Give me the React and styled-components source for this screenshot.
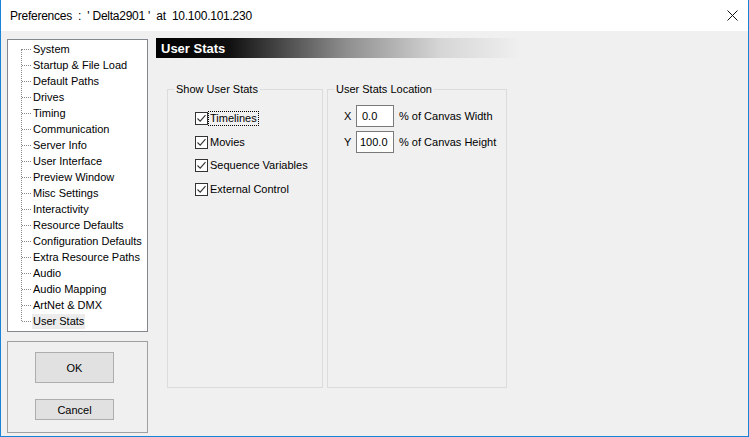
import React from 'react'
import styled, { createGlobalStyle } from 'styled-components'

const GlobalStyle = createGlobalStyle`
  body {
    margin: 0;
    background: #ffffff;
  }
  * { box-sizing: border-box; }
`

const Window = styled.div`
  width: 749px;
  height: 437px;
  display: flex;
  flex-direction: column;
  border: 1px solid #1883d7;
  border-top: none;
  font-family: "Liberation Sans", Arial, sans-serif;
  font-size: 11px;
  color: #000;
  overflow: hidden;
`

const TitleBar = styled.div`
  height: 31px;
  flex: none;
  display: flex;
  align-items: center;
  justify-content: space-between;
  background: #fff;
  padding: 0 9px 0 9px;
  font-family: "Liberation Sans", Arial, sans-serif;
  font-size: 12px;
  letter-spacing: -0.25px;
  white-space: pre;
`

const CloseButton = styled.div`
  width: 12px;
  height: 12px;
  display: flex;
  align-items: center;
  justify-content: center;
  margin-right: 1px;
`

const Body = styled.div`
  flex: 1;
  background: #f0f0f0;
  display: flex;
  padding: 8px 0 0 6px;
`

const LeftColumn = styled.div`
  width: 141px;
  display: flex;
  flex-direction: column;
  gap: 9px;
`

const TreeBox = styled.div`
  height: 293px;
  background: #fff;
  border: 1px solid #828790;
  padding-top: 1px;
`

const TreeList = styled.ul`
  position: relative;
  list-style: none;
  margin: 0;
  padding: 0;

  &::before {
    content: '';
    position: absolute;
    left: 13px;
    top: 8px;
    height: 272px;
    border-left: 1px dotted #8a8a8a;
  }
`

const TreeItem = styled.li`
  height: 16px;
  display: flex;
  align-items: center;
  padding-left: 14px;

  &::before {
    content: '';
    width: 9px;
    margin-right: 1px;
    border-top: 1px dotted #8a8a8a;
  }
`

const TreeLabel = styled.span`
  padding: 1px 1px 2px 1px;
  background: ${p => (p.$selected ? '#ececec' : 'transparent')};
  white-space: nowrap;
`

const ButtonPanel = styled.div`
  height: 92px;
  border: 1px solid #a0a0a0;
  display: flex;
  flex-direction: column;
  padding: 10px 0 0 27px;
  gap: 16px;
`

const DialogButton = styled.div`
  width: 79px;
  height: ${p => p.$tall ? '31px' : '21px'};
  background: #e1e1e1;
  border: 1px solid #adadad;
  display: flex;
  align-items: center;
  justify-content: center;
`

const Content = styled.div`
  margin-left: 8px;
  display: flex;
  flex-direction: column;
`

const SectionHeader = styled.div`
  width: 365px;
  height: 20px;
  margin-top: -1px;
  padding-left: 5px;
  display: flex;
  align-items: center;
  background: linear-gradient(to right, #000 0%, #101010 20%, #8e8e8e 52%, #d6d6d6 78%, #f0f0f0 100%);
  color: #fff;
  font-weight: bold;
  font-size: 13px;
`

const GroupRow = styled.div`
  display: flex;
  gap: 4px;
  margin: 25px 0 0 11px;
`

const Group = styled.fieldset`
  width: ${p => p.$width}px;
  height: 305px;
  margin: 0;
  padding: 0;
  border: 1px solid #dcdcdc;
  display: flex;
  flex-direction: column;
`

const Legend = styled.legend`
  margin-left: 6px;
  padding: 0 2px;
  line-height: 13px;
`

const CheckList = styled.div`
  display: flex;
  flex-direction: column;
  gap: 10.5px;
  padding: 16px 0 0 27px;
`

const CheckRow = styled.div`
  display: flex;
  align-items: center;
  height: 13px;
  gap: 1px;
`

const Box = styled.span`
  width: 13px;
  height: 13px;
  border: 1px solid #333;
  background: #fff;
  display: flex;
  align-items: center;
  justify-content: center;
`

const CheckText = styled.span`
  padding: 0 1px;
  line-height: 13px;
  outline: ${p => (p.$focus ? '1px dotted #000' : 'none')};
`

const FieldList = styled.div`
  display: flex;
  flex-direction: column;
  gap: 4px;
  padding: 9px 0 0 16px;
`

const FieldRow = styled.div`
  display: flex;
  align-items: center;
  gap: 5px;
`

const Axis = styled.span`
  width: 7px;
`

const NumberBox = styled.div`
  width: 38px;
  height: 22px;
  background: #fff;
  border: 1px solid #7a7a7a;
  display: flex;
  align-items: center;
  padding-left: ${p => p.$pad}px;
`

const treeItems = [
  'System', 'Startup & File Load', 'Default Paths', 'Drives', 'Timing',
  'Communication', 'Server Info', 'User Interface', 'Preview Window',
  'Misc Settings', 'Interactivity', 'Resource Defaults', 'Configuration Defaults',
  'Extra Resource Paths', 'Audio', 'Audio Mapping', 'ArtNet & DMX', 'User Stats',
]

const checks = ['Timelines', 'Movies', 'Sequence Variables', 'External Control']

function Check({ label, focus }) {
  return (
    <CheckRow>
      <Box>
        <svg width="11" height="11" viewBox="0 0 11 11">
          <path d="M1.5 5.5 L4.2 8.2 L9.5 2.2" fill="none" stroke="#333" strokeWidth="1.1" />
        </svg>
      </Box>
      <CheckText $focus={focus}>{label}</CheckText>
    </CheckRow>
  )
}

export default function App() {
  return (
    <>
      <GlobalStyle />
      <Window>
        <TitleBar>
          <span>Preferences  :  ' Delta2901 '  at  10.100.101.230</span>
          <CloseButton>
            <svg width="11" height="11" viewBox="0 0 11 11">
              <path d="M0.5 0.5 L10.5 10.5 M10.5 0.5 L0.5 10.5" stroke="#111" strokeWidth="1" />
            </svg>
          </CloseButton>
        </TitleBar>
        <Body>
          <LeftColumn>
            <TreeBox>
              <TreeList>
                {treeItems.map(item => (
                  <TreeItem key={item}>
                    <TreeLabel $selected={item === 'User Stats'}>{item}</TreeLabel>
                  </TreeItem>
                ))}
              </TreeList>
            </TreeBox>
            <ButtonPanel>
              <DialogButton $tall>OK</DialogButton>
              <DialogButton>Cancel</DialogButton>
            </ButtonPanel>
          </LeftColumn>
          <Content>
            <SectionHeader>User Stats</SectionHeader>
            <GroupRow>
              <Group $width={156}>
                <Legend>Show User Stats</Legend>
                <CheckList>
                  {checks.map((c, i) => (
                    <Check key={c} label={c} focus={i === 0} />
                  ))}
                </CheckList>
              </Group>
              <Group $width={180}>
                <Legend>User Stats Location</Legend>
                <FieldList>
                  <FieldRow>
                    <Axis>X</Axis>
                    <NumberBox $pad={5}>0.0</NumberBox>
                    <span>% of Canvas Width</span>
                  </FieldRow>
                  <FieldRow>
                    <Axis>Y</Axis>
                    <NumberBox $pad={3}>100.0</NumberBox>
                    <span>% of Canvas Height</span>
                  </FieldRow>
                </FieldList>
              </Group>
            </GroupRow>
          </Content>
        </Body>
      </Window>
    </>
  )
}
